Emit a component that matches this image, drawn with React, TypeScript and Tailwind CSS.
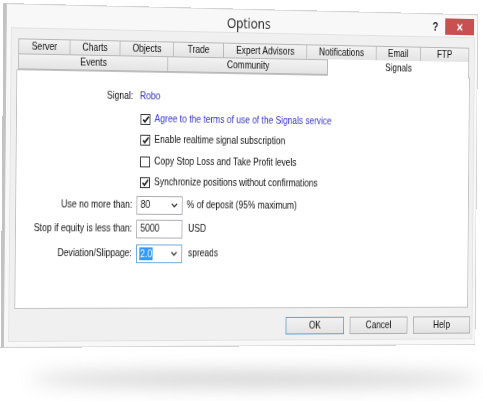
import React from "react";

const Check = () => (
  <svg width="9" height="9" viewBox="0 0 9 9" className="block">
    <path d="M1.2 4.6 L3.4 6.9 L7.9 1.6" fill="none" stroke="#222" strokeWidth="1.7" />
  </svg>
);

const Checkbox = ({ checked }: { checked: boolean }) => (
  <div className="w-[12px] h-[11px] border border-[#333] bg-white flex items-center justify-center shrink-0">
    {checked ? <Check /> : null}
  </div>
);

const Chevron = () => (
  <svg width="8" height="5" viewBox="0 0 8 5" className="block">
    <path d="M0.8 0.8 L4 3.8 L7.2 0.8" fill="none" stroke="#333" strokeWidth="1.3" />
  </svg>
);

const Tab = ({ label, w, first }: { label: string; w: string; first?: boolean }) => (
  <div
    className={`${w} h-full flex items-center justify-center bg-gradient-to-b from-[#f2f2f2] to-[#e4e4e4] border-t border-b border-r border-[#b7b7b7] ${
      first ? "border-l" : ""
    } text-[#111]`}
  >
    {label}
  </div>
);

const Button = ({ label, def }: { label: string; def?: boolean }) => (
  <div
    className={`w-[73px] h-[18px] border ${
      def ? "border-[#5a9fd4]" : "border-[#adadad]"
    } bg-gradient-to-b from-[#f2f2f2] to-[#e3e3e3] flex items-center justify-center text-[#111]`}
  >
    {label}
  </div>
);

export default function App() {
  return (
    <div className="w-[483px] h-[401px] bg-white overflow-hidden font-['Liberation_Sans',Arial,sans-serif] text-[10.4px] leading-none text-[#111]">
      <div className="pt-[3px] pl-[2px] w-[483px]">
        <div className="w-[585px] h-[345px] bg-[#f8f8f8] border border-[#d3d3d3] border-l-[4px] border-l-[#c3c3c3] flex flex-col origin-left [transform:perspective(1000px)_rotateY(5deg)_rotate(0.5deg)_scaleX(0.85)]">
          {/* title bar */}
          <div className="h-[23px] flex items-start shrink-0">
            <div className="flex-1 text-center pt-[5px] pl-[62px] font-['Noto_Sans','Open_Sans',sans-serif] text-[14.5px] leading-[17px] text-[#333]">
              Options
            </div>
            <div className="flex items-start">
              <div className="pt-[7px] pr-[9px] font-bold text-[12px] leading-[12px] text-[#222]">?</div>
              <div className="mt-[4px] mr-[4px] w-[37px] h-[17px] bg-[#c75050] flex items-center justify-center text-white font-bold text-[14px] leading-none">
                ×
              </div>
            </div>
          </div>
          {/* client area */}
          <div className="flex-1 ml-[5px] mr-[3px] mb-[5px] bg-[#f0f0f0] border border-[#e2e2e2] flex flex-col pl-[6px] pr-[5px] pt-[10px]">
            {/* tabs */}
            <div className="flex h-[16px] ml-[2px] mr-[1px]">
              <Tab label="Server" w="w-[62px]" first />
              <Tab label="Charts" w="w-[60px]" />
              <Tab label="Objects" w="w-[65px]" />
              <Tab label="Trade" w="w-[61px]" />
              <Tab label="Expert Advisors" w="w-[103px]" />
              <Tab label="Notifications" w="w-[87px]" />
              <Tab label="Email" w="w-[56px]" />
              <Tab label="FTP" w="flex-1" />
            </div>
            <div className="flex h-[16px] ml-[2px] mr-[1px] -mt-px relative z-10">
              <Tab label="Events" w="w-[180px]" first />
              <Tab label="Community" w="w-[197px]" />
              <div className="flex-1 h-[17px] flex items-center justify-center bg-white border-r border-[#b7b7b7] text-[#111]">
                Signals
              </div>
            </div>
            {/* panel */}
            <div className="h-[240px] bg-white border border-[#c2c2c2] flex flex-col pt-[14px] shrink-0">
              <div className="flex h-[20px] items-center">
                <div className="w-[144px] pr-[5px] text-right">Signal:</div>
                <div className="pl-[3px] text-[#2b2bb8]">Robo</div>
              </div>
              <div className="flex h-[20px] items-center mt-[3px]">
                <div className="w-[144px]" />
                <div className="flex items-center gap-[5px] pl-[4px]">
                  <Checkbox checked />
                  <span className="text-[#3535cc]">Agree to the terms of use of the Signals service</span>
                </div>
              </div>
              <div className="flex h-[20px] items-center mt-[1px]">
                <div className="w-[144px]" />
                <div className="flex items-center gap-[5px] pl-[4px]">
                  <Checkbox checked />
                  <span>Enable realtime signal subscription</span>
                </div>
              </div>
              <div className="flex h-[20px] items-center mt-[2px]">
                <div className="w-[144px]" />
                <div className="flex items-center gap-[5px] pl-[4px]">
                  <Checkbox checked={false} />
                  <span>Copy Stop Loss and Take Profit levels</span>
                </div>
              </div>
              <div className="flex h-[20px] items-center mt-[1px]">
                <div className="w-[144px]" />
                <div className="flex items-center gap-[5px] pl-[4px]">
                  <Checkbox checked />
                  <span>Synchronize positions without confirmations</span>
                </div>
              </div>
              <div className="flex h-[20px] items-center mt-[3px]">
                <div className="w-[144px] pr-[5px] text-right">Use no more than:</div>
                <div className="w-[56px] h-[19px] border border-[#abadb3] bg-white flex items-center justify-between pl-[4px] pr-[5px]">
                  <span>80</span>
                  <Chevron />
                </div>
                <div className="pl-[5px]">% of deposit (95% maximum)</div>
              </div>
              <div className="flex h-[20px] items-center mt-[4px]">
                <div className="w-[144px] pr-[5px] text-right">Stop if equity is less than:</div>
                <div className="w-[56px] h-[19px] border border-[#abadb3] bg-white flex items-center pl-[4px]">
                  <span>5000</span>
                </div>
                <div className="pl-[7px]">USD</div>
              </div>
              <div className="flex h-[20px] items-center mt-[5px]">
                <div className="w-[144px] pr-[5px] text-right">Deviation/Slippage:</div>
                <div className="w-[56px] h-[19px] border border-[#6fa8dc] bg-white flex items-center justify-between pl-[3px] pr-[5px]">
                  <span className="bg-[#3399ff] text-white px-[1px] leading-[13px]">2.0</span>
                  <Chevron />
                </div>
                <div className="pl-[7px]">spreads</div>
              </div>
            </div>
            {/* buttons */}
            <div className="flex justify-end gap-[7px] mt-[9px] -mr-[3px]">
              <Button label="OK" def />
              <Button label="Cancel" />
              <Button label="Help" />
            </div>
          </div>
        </div>
      </div>
      {/* floor shadow */}
      <div className="mt-[24px] ml-[30px] w-[450px] h-[14px] rounded-[50%] bg-[#a8a8a8] blur-[9px] opacity-60" />
    </div>
  );
}
